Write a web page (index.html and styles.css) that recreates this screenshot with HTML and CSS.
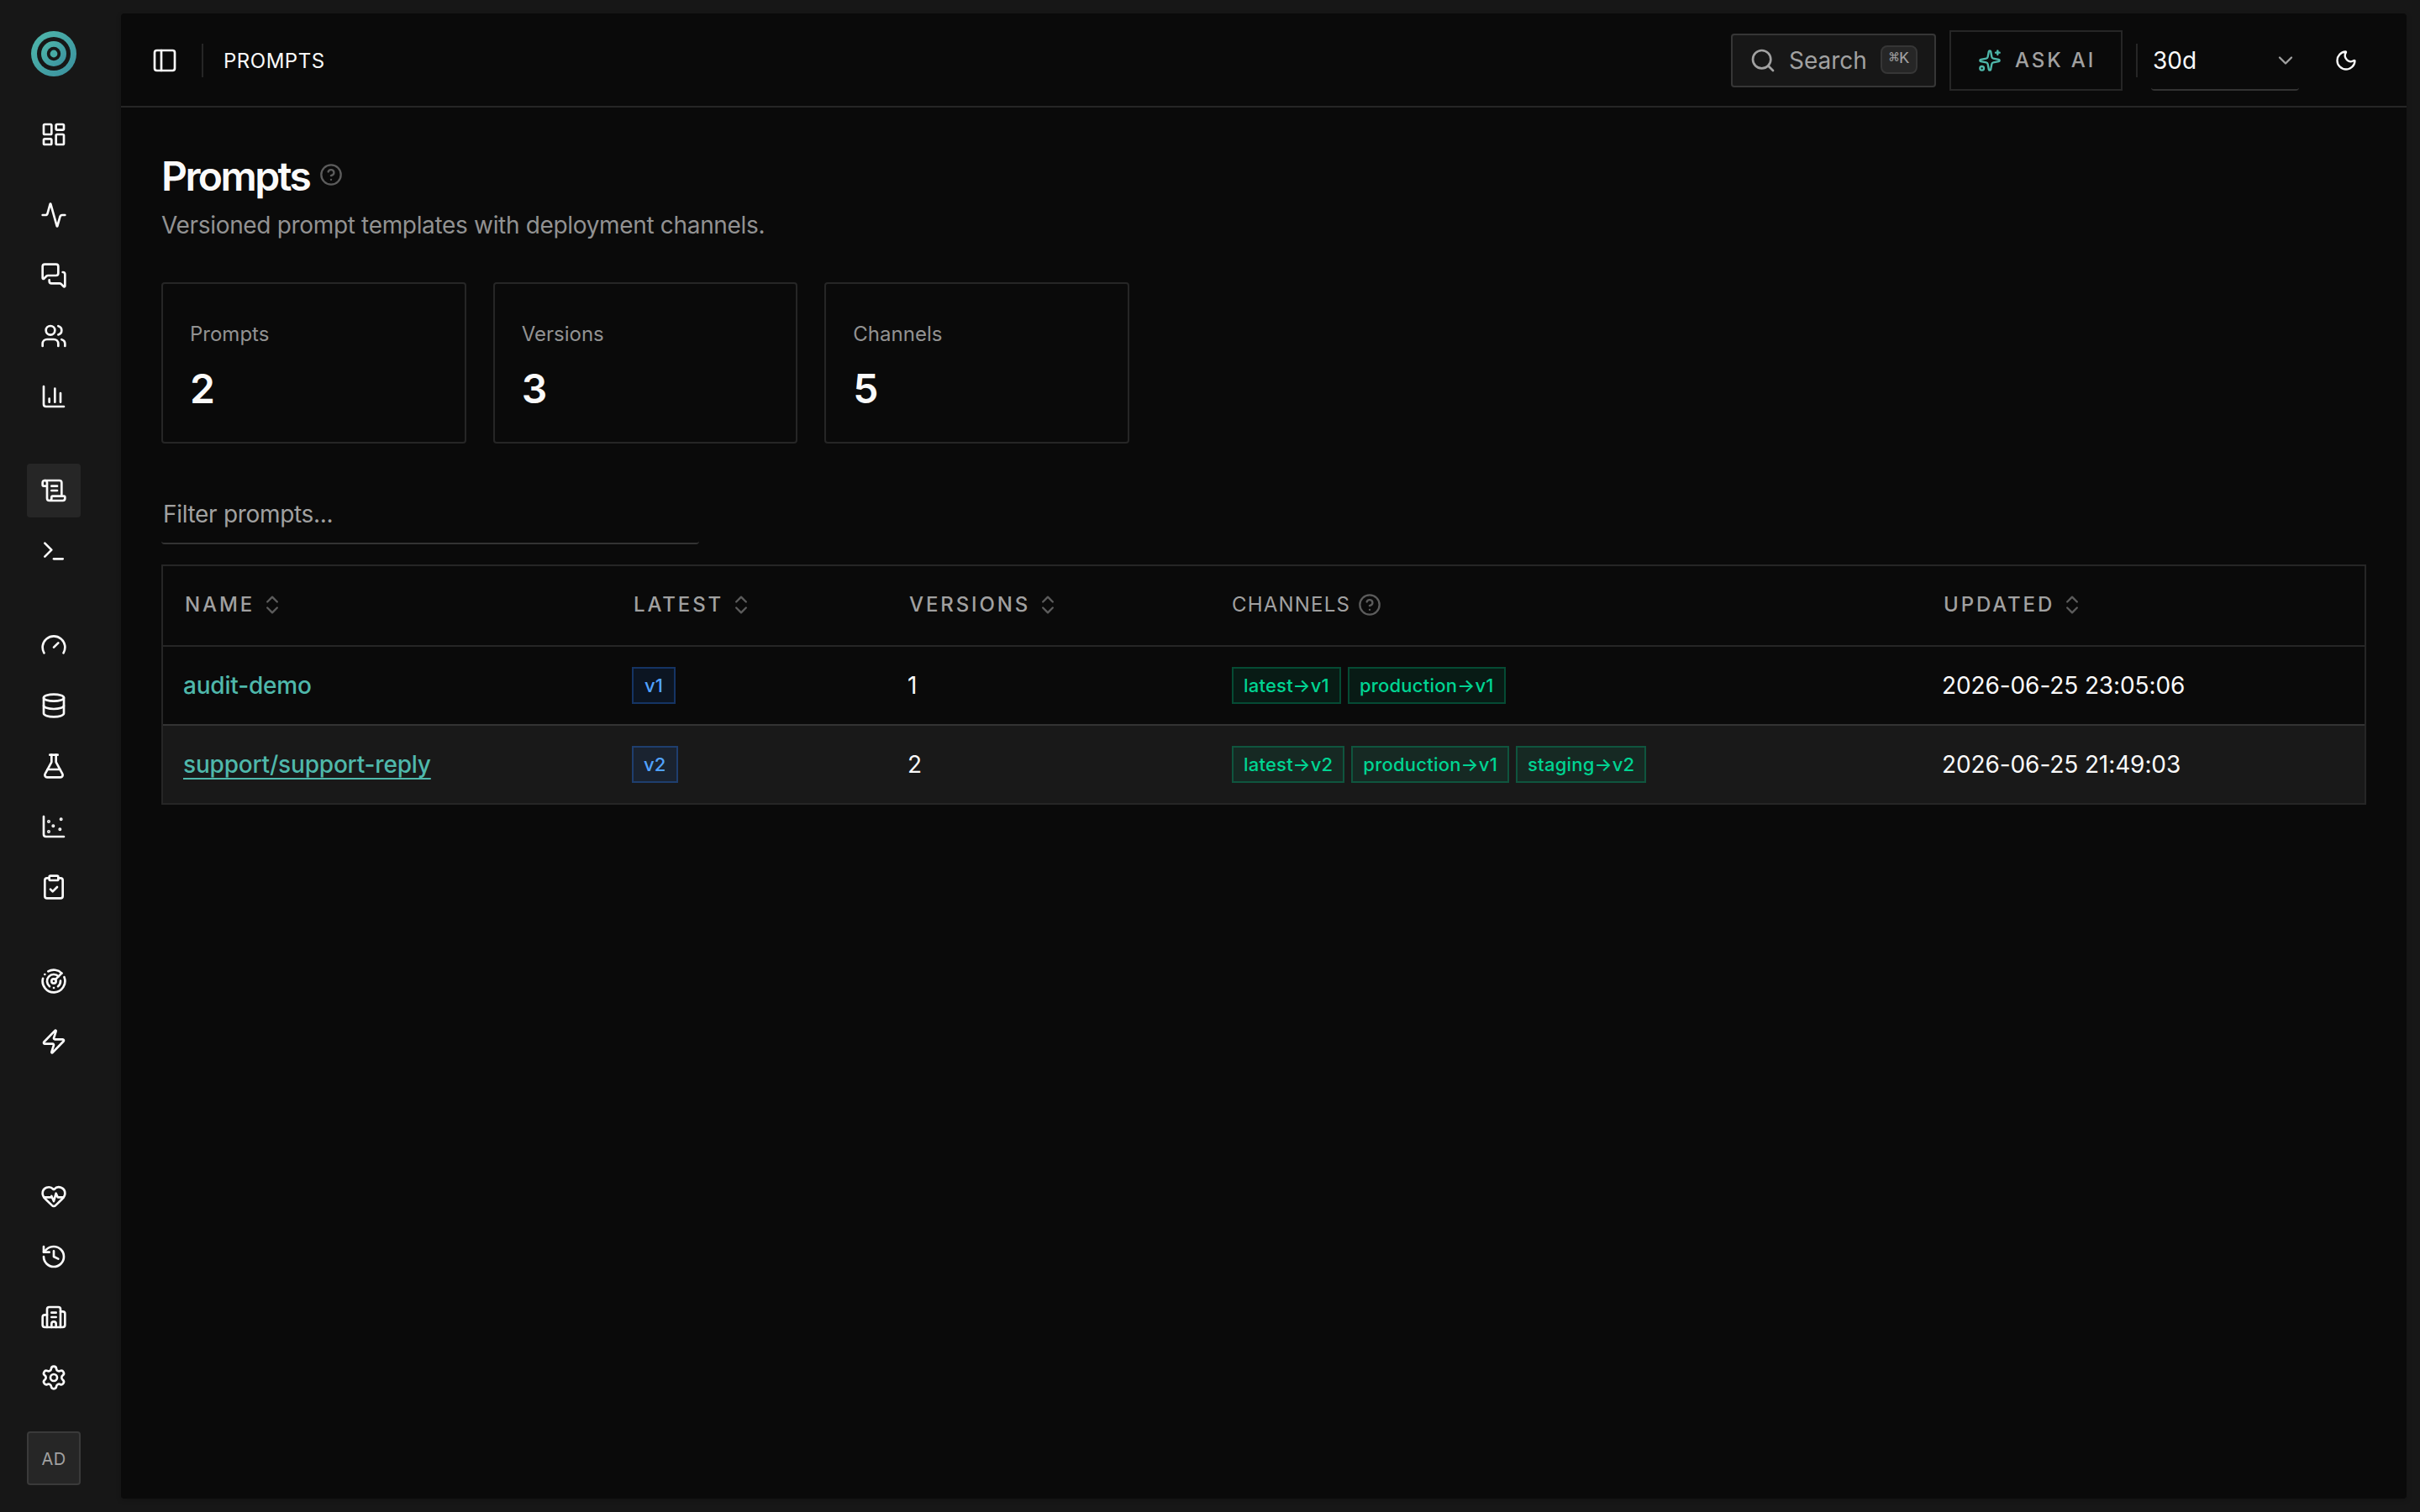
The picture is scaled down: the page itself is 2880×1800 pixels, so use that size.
FILE: index.html
```html
<!DOCTYPE html>
<html lang="en">
<head>
<meta charset="UTF-8" />
<meta name="viewport" content="width=device-width, initial-scale=1" />
<title>Prompts</title>
<link rel="stylesheet" href="styles.css">
</head>
<body>

<aside class="sidebar">
  <svg class="logo" viewBox="0 0 54 54">
    <defs>
      <linearGradient id="logo-fill" x1="0" y1="0" x2="1" y2="1">
        <stop offset="0" stop-color="#4fb8ab" />
        <stop offset="1" stop-color="#3a8f9e" />
      </linearGradient>
    </defs>
    <circle cx="27" cy="27" r="27" fill="url(#logo-fill)" />
    <circle cx="27" cy="27" r="20" fill="#171717" />
    <circle cx="27" cy="27" r="15" fill="url(#logo-fill)" />
    <circle cx="27" cy="27" r="8.2" fill="#171717" />
    <circle cx="27" cy="27" r="4.4" fill="#47aba6" />
  </svg>

  <nav class="side-nav">
    <div class="nav-group">
      <a class="nav-item"><svg class="icon" viewBox="0 0 24 24"><rect width="7" height="9" x="3" y="3" rx="1" /><rect width="7" height="5" x="14" y="3" rx="1" /><rect width="7" height="9" x="14" y="12" rx="1" /><rect width="7" height="5" x="3" y="16" rx="1" /></svg></a>
    </div>
    <div class="nav-group nav-group-first">
      <a class="nav-item"><svg class="icon" viewBox="0 0 24 24"><path d="M22 12h-2.48a2 2 0 0 0-1.93 1.46l-2.35 8.36a.25.25 0 0 1-.48 0L9.24 2.18a.25.25 0 0 0-.48 0l-2.35 8.36A2 2 0 0 1 4.49 12H2" /></svg></a>
      <a class="nav-item"><svg class="icon" viewBox="0 0 24 24"><path d="M16 10a2 2 0 0 1-2 2H6.828a2 2 0 0 0-1.414.586l-2.202 2.202A.71.71 0 0 1 2 14.286V4a2 2 0 0 1 2-2h10a2 2 0 0 1 2 2z" /><path d="M20 9a2 2 0 0 1 2 2v10.286a.71.71 0 0 1-1.212.502l-2.202-2.202A2 2 0 0 0 17.172 19H10a2 2 0 0 1-2-2v-1" /></svg></a>
      <a class="nav-item"><svg class="icon" viewBox="0 0 24 24"><path d="M16 21v-2a4 4 0 0 0-4-4H6a4 4 0 0 0-4 4v2" /><path d="M16 3.128a4 4 0 0 1 0 7.744" /><path d="M22 21v-2a4 4 0 0 0-3-3.87" /><circle cx="9" cy="7" r="4" /></svg></a>
      <a class="nav-item"><svg class="icon" viewBox="0 0 24 24"><path d="M3 3v16a2 2 0 0 0 2 2h16" /><path d="M18 17V9" /><path d="M13 17V5" /><path d="M8 17v-3" /></svg></a>
    </div>
    <div class="nav-group">
      <a class="nav-item active"><svg class="icon" viewBox="0 0 24 24"><path d="M15 12h-5" /><path d="M15 8h-5" /><path d="M19 17V5a2 2 0 0 0-2-2H4" /><path d="M8 21h12a2 2 0 0 0 2-2v-1a1 1 0 0 0-1-1H11a1 1 0 0 0-1 1v1a2 2 0 1 1-4 0V5a2 2 0 1 0-4 0v2a1 1 0 0 0 1 1h3" /></svg></a>
      <a class="nav-item"><svg class="icon" viewBox="0 0 24 24"><path d="M12 19h8" /><path d="m4 17 6-6-6-6" /></svg></a>
    </div>
    <div class="nav-group">
      <a class="nav-item"><svg class="icon" viewBox="0 0 24 24"><path d="m12 14 4-4" /><path d="M3.34 19a10 10 0 1 1 17.32 0" /></svg></a>
      <a class="nav-item"><svg class="icon" viewBox="0 0 24 24"><ellipse cx="12" cy="5" rx="9" ry="3" /><path d="M3 5V19A9 3 0 0 0 21 19V5" /><path d="M3 12A9 3 0 0 0 21 12" /></svg></a>
      <a class="nav-item"><svg class="icon" viewBox="0 0 24 24"><path d="M14 2v6a2 2 0 0 0 .245.96l5.51 10.08A2 2 0 0 1 18 22H6a2 2 0 0 1-1.755-2.96l5.51-10.08A2 2 0 0 0 10 8V2" /><path d="M6.453 15h11.094" /><path d="M8.5 2h7" /></svg></a>
      <a class="nav-item"><svg class="icon" viewBox="0 0 24 24"><circle cx="7.5" cy="7.5" r=".5" fill="currentColor" /><circle cx="18.5" cy="5.5" r=".5" fill="currentColor" /><circle cx="11.5" cy="11.5" r=".5" fill="currentColor" /><circle cx="7.5" cy="16.5" r=".5" fill="currentColor" /><circle cx="17.5" cy="14.5" r=".5" fill="currentColor" /><path d="M3 3v16a2 2 0 0 0 2 2h16" /></svg></a>
      <a class="nav-item"><svg class="icon" viewBox="0 0 24 24"><rect width="8" height="4" x="8" y="2" rx="1" /><path d="M16 4h2a2 2 0 0 1 2 2v14a2 2 0 0 1-2 2H6a2 2 0 0 1-2-2V6a2 2 0 0 1 2-2h2" /><path d="m9 14 2 2 4-4" /></svg></a>
    </div>
    <div class="nav-group">
      <a class="nav-item"><svg class="icon" viewBox="0 0 24 24"><path d="M19.07 4.93A10 10 0 0 0 6.99 3.34" /><path d="M4 6h.01" /><path d="M2.29 9.62A10 10 0 1 0 21.31 8.35" /><path d="M16.24 7.76A6 6 0 1 0 8.23 16.67" /><path d="M12 18h.01" /><path d="M17.99 11.66A6 6 0 0 1 15.77 16.67" /><circle cx="12" cy="12" r="2" /><path d="m13.41 10.59 5.66-5.66" /></svg></a>
      <a class="nav-item"><svg class="icon" viewBox="0 0 24 24"><path d="M4 14a1 1 0 0 1-.78-1.63l9.9-10.2a.5.5 0 0 1 .86.46l-1.92 6.02A1 1 0 0 0 13 10h7a1 1 0 0 1 .78 1.63l-9.9 10.2a.5.5 0 0 1-.86-.46l1.92-6.02A1 1 0 0 0 11 14z" /></svg></a>
    </div>
  </nav>

  <nav class="side-footer">
    <a class="nav-item"><svg class="icon" viewBox="0 0 24 24"><path d="M2 9.5a5.5 5.5 0 0 1 9.591-3.676.56.56 0 0 0 .818 0A5.49 5.49 0 0 1 22 9.5c0 2.29-1.5 4-3 5.5l-5.492 5.313a2 2 0 0 1-3 .019L5 15c-1.5-1.5-3-3.2-3-5.5" /><path d="M3.22 13H9.5l.5-1 2 4.5 2-7 1.5 3.5h5.27" /></svg></a>
    <a class="nav-item"><svg class="icon" viewBox="0 0 24 24"><path d="M3 12a9 9 0 1 0 9-9 9.75 9.75 0 0 0-6.74 2.74L3 8" /><path d="M3 3v5h5" /><path d="M12 7v5l4 2" /></svg></a>
    <a class="nav-item"><svg class="icon" viewBox="0 0 24 24"><path d="M10 12h4" /><path d="M10 8h4" /><path d="M14 21v-3a2 2 0 0 0-4 0v3" /><path d="M6 10H4a2 2 0 0 0-2 2v7a2 2 0 0 0 2 2h16a2 2 0 0 0 2-2V9a2 2 0 0 0-2-2h-2" /><path d="M6 21V5a2 2 0 0 1 2-2h8a2 2 0 0 1 2 2v16" /></svg></a>
    <a class="nav-item"><svg class="icon" viewBox="0 0 24 24"><path d="M9.671 4.136a2.34 2.34 0 0 1 4.659 0 2.34 2.34 0 0 0 3.319 1.915 2.34 2.34 0 0 1 2.33 4.033 2.34 2.34 0 0 0 0 3.831 2.34 2.34 0 0 1-2.33 4.033 2.34 2.34 0 0 0-3.319 1.915 2.34 2.34 0 0 1-4.659 0 2.34 2.34 0 0 0-3.32-1.915 2.34 2.34 0 0 1-2.33-4.033 2.34 2.34 0 0 0 0-3.831A2.34 2.34 0 0 1 6.35 6.051a2.34 2.34 0 0 0 3.319-1.915" /><circle cx="12" cy="12" r="3" /></svg></a>
    <div class="avatar">AD</div>
  </nav>
</aside>

<div class="panel">
  <header class="topbar">
    <button class="toggle"><svg class="icon" viewBox="0 0 24 24"><rect width="18" height="18" x="3" y="3" rx="2" /><path d="M9 3v18" /></svg></button>
    <span class="divider"></span>
    <span class="crumb">PROMPTS</span>
    <div class="actions">
      <button class="search">
        <svg class="icon" viewBox="0 0 24 24"><path d="m21 21-4.34-4.34" /><circle cx="11" cy="11" r="8" /></svg>
        <span class="search-text">Search</span>
        <kbd>⌘K</kbd>
      </button>
      <button class="ask-ai">
        <svg class="icon" viewBox="0 0 24 24"><path d="M11.017 2.814a1 1 0 0 1 1.966 0l1.051 5.558a2 2 0 0 0 1.594 1.594l5.558 1.051a1 1 0 0 1 0 1.966l-5.558 1.051a2 2 0 0 0-1.594 1.594l-1.051 5.558a1 1 0 0 1-1.966 0l-1.051-5.558a2 2 0 0 0-1.594-1.594l-5.558-1.051a1 1 0 0 1 0-1.966l5.558-1.051a2 2 0 0 0 1.594-1.594z" /><path d="M20 2v4" /><path d="M22 4h-4" /><circle cx="4" cy="20" r="2" /></svg>
        <span>ASK AI</span>
      </button>
      <span class="divider"></span>
      <button class="range">
        <span>30d</span>
        <svg class="icon" viewBox="0 0 24 24"><path d="m6 9 6 6 6-6" /></svg>
      </button>
      <button class="theme"><svg class="icon" viewBox="0 0 24 24"><path d="M20.985 12.486a9 9 0 1 1-9.473-9.472c.405-.022.617.46.402.803a6 6 0 0 0 8.268 8.268c.344-.215.825-.004.803.401" /></svg></button>
    </div>
  </header>

  <main>
    <div class="title-row">
      <h1>Prompts</h1>
      <svg class="icon help" viewBox="0 0 24 24"><circle cx="12" cy="12" r="10" /><path d="M9.09 9a3 3 0 0 1 5.83 1c0 2-3 3-3 3" /><path d="M12 17h.01" /></svg>
    </div>
    <p class="subtitle">Versioned prompt templates with deployment channels.</p>

    <section class="stats">
      <div class="stat"><span class="stat-label">Prompts</span><span class="stat-value">2</span></div>
      <div class="stat"><span class="stat-label">Versions</span><span class="stat-value">3</span></div>
      <div class="stat"><span class="stat-label">Channels</span><span class="stat-value">5</span></div>
    </section>

    <div class="filter">Filter prompts...</div>

    <div class="table">
      <div class="row head">
        <div class="cell sortable"><span>NAME</span><svg class="icon" viewBox="0 0 24 24"><path d="m7 15 5 5 5-5" /><path d="m7 9 5-5 5 5" /></svg></div>
        <div class="cell sortable"><span>LATEST</span><svg class="icon" viewBox="0 0 24 24"><path d="m7 15 5 5 5-5" /><path d="m7 9 5-5 5 5" /></svg></div>
        <div class="cell sortable"><span>VERSIONS</span><svg class="icon" viewBox="0 0 24 24"><path d="m7 15 5 5 5-5" /><path d="m7 9 5-5 5 5" /></svg></div>
        <div class="cell plain"><span>CHANNELS</span><svg class="icon help" viewBox="0 0 24 24"><circle cx="12" cy="12" r="10" /><path d="M9.09 9a3 3 0 0 1 5.83 1c0 2-3 3-3 3" /><path d="M12 17h.01" /></svg></div>
        <div class="cell sortable"><span>UPDATED</span><svg class="icon" viewBox="0 0 24 24"><path d="m7 15 5 5 5-5" /><path d="m7 9 5-5 5 5" /></svg></div>
      </div>
      <div class="row">
        <div class="cell"><a class="name">audit-demo</a></div>
        <div class="cell"><span class="badge blue">v1</span></div>
        <div class="cell">1</div>
        <div class="cell channels"><span class="badge green">latest→v1</span><span class="badge green">production→v1</span></div>
        <div class="cell date">2026-06-25 23:05:06</div>
      </div>
      <div class="row hovered">
        <div class="cell"><a class="name">support/support-reply</a></div>
        <div class="cell"><span class="badge blue">v2</span></div>
        <div class="cell">2</div>
        <div class="cell channels"><span class="badge green">latest→v2</span><span class="badge green">production→v1</span><span class="badge green">staging→v2</span></div>
        <div class="cell date">2026-06-25 21:49:03</div>
      </div>
    </div>
  </main>
</div>

</body>
</html>
```
FILE: styles.css
```css
* {
  box-sizing: border-box;
  margin: 0;
  padding: 0;
}

body {
  display: flex;
  height: 100vh;
  background: #171717;
  color: #fafafa;
  font-family: Inter, sans-serif;
  font-size: 28px;
  line-height: 40px;
  overflow: hidden;
}

button {
  background: none;
  border: none;
  color: inherit;
  font: inherit;
}

.icon {
  display: block;
  flex: none;
  width: 32px;
  height: 32px;
  fill: none;
  stroke: currentColor;
  stroke-width: 2;
  stroke-linecap: round;
  stroke-linejoin: round;
}

/* sidebar */
.sidebar {
  width: 128px;
  flex: none;
  display: flex;
  flex-direction: column;
  align-items: center;
  padding: 37px 0 32px;
}

.logo {
  display: block;
  width: 54px;
  height: 54px;
  margin-bottom: 37px;
}

.side-nav {
  display: flex;
  flex-direction: column;
  gap: 48px;
}

.nav-group,
.side-footer {
  display: flex;
  flex-direction: column;
  gap: 8px;
}

.nav-group-first {
  margin-top: -16px;
}

.nav-item {
  width: 64px;
  height: 64px;
  display: flex;
  align-items: center;
  justify-content: center;
  border-radius: 4px;
}

.nav-item.active {
  background: #262626;
}

.side-footer {
  margin-top: auto;
}

.avatar {
  width: 64px;
  height: 64px;
  margin-top: 24px;
  padding-top: 2px;
  display: flex;
  align-items: center;
  justify-content: center;
  background: #262626;
  border: 2px solid #3a3a3a;
  border-radius: 4px;
  color: #a1a1a1;
  font-size: 20px;
  letter-spacing: 0.5px;
}

/* main panel */
.panel {
  flex: 1;
  min-width: 0;
  margin: 16px;
  background: #0a0a0a;
  border-radius: 4px;
  box-shadow: 0 2px 6px rgba(0, 0, 0, 0.2);
}

.topbar {
  height: 112px;
  display: flex;
  align-items: center;
  padding: 2px 58px 0 36px;
  border-bottom: 2px solid #262626;
}

.divider {
  width: 2px;
  height: 40px;
  background: #262626;
}

.toggle {
  margin-right: 28px;
}

.crumb {
  margin-left: 24px;
  padding-top: 1px;
  font-size: 24px;
  letter-spacing: 0.5px;
}

.actions {
  margin-left: auto;
  display: flex;
  align-items: center;
}

.search {
  width: 244px;
  height: 64px;
  display: flex;
  align-items: center;
  padding: 0 20px;
  margin-right: 16px;
  background: #171717;
  border: 2px solid #363636;
  border-radius: 4px;
  color: #a1a1a1;
}

.search-text {
  margin-left: 15px;
}

kbd {
  width: 44px;
  height: 34px;
  display: flex;
  align-items: center;
  justify-content: center;
  margin: 0 0 2px auto;
  padding-bottom: 3px;
  background: #262626;
  border: 2px solid #363636;
  border-radius: 8px;
  font-family: "Liberation Mono", "DejaVu Sans Mono", monospace;
  font-size: 20px;
  line-height: 28px;
}

.ask-ai {
  width: 206px;
  height: 72px;
  display: flex;
  align-items: center;
  padding: 0 0 0 32px;
  gap: 16px;
  margin-right: 16px;
  border: 2px solid #262626;
  color: #a1a1a1;
  font-size: 24px;
  font-weight: 500;
  letter-spacing: 2.88px;
  white-space: nowrap;
}

.ask-ai .icon {
  width: 28px;
  height: 28px;
  color: #4fb8ab;
}

.range {
  width: 176px;
  height: 72px;
  display: flex;
  align-items: center;
  justify-content: space-between;
  margin: 0 42px 0 16px;
  padding: 2px 2px 0;
  border-bottom: 2px solid #333;
  border-radius: 4px;
}

.range .icon {
  width: 28px;
  height: 28px;
  color: #a1a1a1;
}

.theme .icon {
  width: 28px;
  height: 28px;
}

/* page content */
main {
  padding: 48px;
}

.title-row {
  display: flex;
  align-items: center;
  gap: 12px;
  height: 64px;
}

h1 {
  padding-top: 3px;
  font-size: 48px;
  font-weight: 600;
  line-height: 64px;
  letter-spacing: -2.55px;
}

.help {
  width: 28px;
  height: 28px;
  color: #5c5c5c;
}

.subtitle {
  margin-top: 8px;
  color: #929292;
  letter-spacing: -0.33px;
}

.stats {
  width: 1152px;
  display: grid;
  grid-template-columns: repeat(3, 1fr);
  gap: 32px;
  margin-top: 48px;
}

.stat {
  height: 192px;
  display: flex;
  flex-direction: column;
  padding: 42px 32px 0;
  border: 2px solid #262626;
  border-radius: 4px;
}

.stat-label {
  color: #929292;
  font-size: 24px;
  line-height: 36px;
}

.stat-value {
  margin-top: 15px;
  font-size: 48px;
  font-weight: 600;
  line-height: 64px;
}

.filter {
  width: 640px;
  height: 72px;
  display: flex;
  align-items: center;
  margin-top: 48px;
  padding: 2px 2px 0;
  border-bottom: 2px solid #333;
  border-radius: 4px;
  color: #a1a1a1;
  letter-spacing: -0.32px;
}

.table {
  margin-top: 24px;
  border: 2px solid #262626;
}

.row {
  display: grid;
  grid-template-columns: 534px 328px 386px 845px 1fr;
  height: 94px;
  border-bottom: 2px solid #333;
}

.row:last-child {
  height: 92px;
  border-bottom: none;
}

.row.head {
  height: 96px;
  border-color: #262626;
}

.row.hovered {
  background: #191919;
}

.cell {
  display: flex;
  align-items: center;
  padding: 0 24px;
}

.head .cell {
  padding-bottom: 2px;
  color: #a1a1a1;
  font-size: 24px;
}

.head .sortable {
  padding-left: 26px;
  font-weight: 500;
  letter-spacing: 2.88px;
  gap: 7px;
}

.sortable .icon {
  width: 28px;
  height: 28px;
  color: #5c5c5c;
}

.plain {
  letter-spacing: 1.2px;
  gap: 9px;
}

.name {
  color: #4fb8ab;
  font-weight: 500;
  letter-spacing: -0.19px;
}

.hovered .name {
  text-decoration: underline;
  text-decoration-thickness: 2px;
  text-underline-offset: 6px;
}

.date {
  letter-spacing: -0.1px;
}

.channels {
  gap: 8px;
}

.badge {
  height: 44px;
  padding: 0 12px;
  border: 2px solid;
  font-size: 22px;
  font-weight: 500;
  line-height: 40px;
  letter-spacing: 0.22px;
}

.blue {
  min-width: 52px;
  text-align: center;
  color: #51a2ff;
  background: rgba(43, 127, 255, 0.1);
  border-color: rgba(43, 127, 255, 0.3);
}

.green {
  color: #00d492;
  background: rgba(0, 188, 125, 0.1);
  border-color: rgba(0, 188, 125, 0.3);
}
```
